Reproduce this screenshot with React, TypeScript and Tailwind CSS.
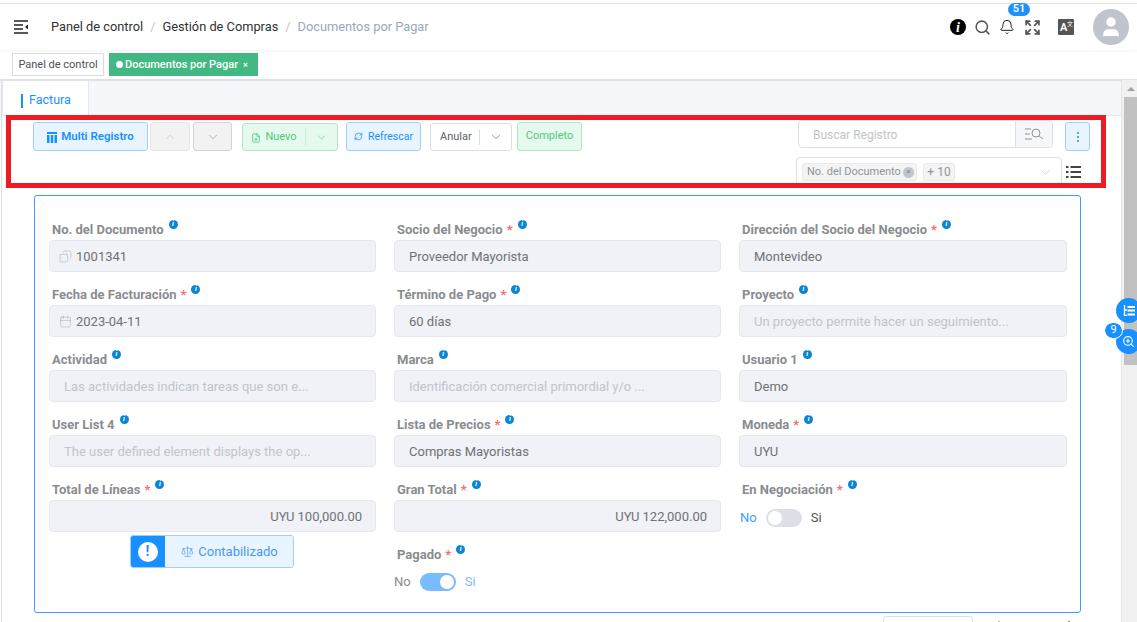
import { ChevronDown, ChevronUp, Search, FilePlus, RefreshCw, Scale, ZoomIn, Bell, Expand, Copy, Calendar, User } from "lucide-react";

function Info() {
  return (
    <span className="ml-[5px] inline-flex h-[9px] w-[9px] -translate-y-[5px] items-center justify-center rounded-full bg-[#0a84d6] text-[7px] font-bold italic leading-none text-white">
      i
    </span>
  );
}

function Label({ text, req }: { text: string; req?: boolean }) {
  return (
    <div className="flex h-[20px] items-center whitespace-nowrap pl-[3px] pt-[1px] text-[13px] font-bold text-[#8a8c90]">
      {text}
      {req && <span className="ml-[4px] text-[#f56c6c]">*</span>}
      <Info />
    </div>
  );
}

function Field({
  label,
  req,
  value,
  ph,
  right,
  icon,
}: {
  label: string;
  req?: boolean;
  value?: string;
  ph?: string;
  right?: boolean;
  icon?: React.ReactNode;
}) {
  return (
    <div className="h-[65px]">
      <Label text={label} req={req} />
      <div
        className={
          "mt-[1px] flex h-[32px] items-center rounded-[4px] border border-[#e4e7ed] bg-[#f0f2f7] pt-[1px] text-[13px] " +
          (right ? "justify-end pr-[13px] " : "pl-[14px] ") +
          (value ? "text-[#6f7176]" : "text-[#c0c4cc]")
        }
      >
        {icon}
        <span className="truncate">{value ?? ph}</span>
      </div>
    </div>
  );
}

function Toggle({ on }: { on: boolean }) {
  return (
    <div className="flex h-[20px] items-center text-[13px]">
      <span className={on ? "text-[#8a8c90]" : "text-[#409eff]"}>No</span>
      <span className={"relative mx-[9px] h-[18px] w-[36px] rounded-full " + (on ? "bg-[#79bbff]" : "bg-[#dcdfe6]")}>
        <span className={"absolute top-[2px] h-[14px] w-[14px] rounded-full bg-white " + (on ? "right-[2px]" : "left-[2px]")} />
      </span>
      <span className={on ? "text-[#79bbff]" : "text-[#555]"}>Si</span>
    </div>
  );
}

export default function App() {
  return (
    <div className="relative h-[622px] w-[1137px] overflow-hidden bg-white font-['Roboto',sans-serif]">
      <div className="mt-[3px] border-t border-[#e4e4e4]" />
      {/* top bar */}
      <div className="flex h-[46px] items-center pr-[8px] shadow-[0_1px_3px_rgba(0,0,0,0.06)]">
        <svg width="15" height="14" viewBox="0 0 15 14" className="ml-[14px]">
          <path d="M0 1h14M0 5h9M0 9h9M0 13h14" stroke="#222" strokeWidth="1.3" />
          <path d="M14 4.500l-3 2.500 3 2.500z" fill="#222" />
        </svg>
        <div className="ml-[22px] flex items-center whitespace-nowrap text-[12.8px] text-[#303133]">
          <span>Panel de control</span>
          <span className="mx-[7px] text-[#c0c4cc]">/</span>
          <span>Gestión de Compras</span>
          <span className="mx-[7px] text-[#c0c4cc]">/</span>
          <span className="text-[#97a8be]">Documentos por Pagar</span>
        </div>
        <div className="ml-auto flex items-center">
          <span className="flex h-[16px] w-[16px] items-center justify-center rounded-full bg-black font-['Liberation_Serif',serif] text-[14px] font-bold italic text-white">i</span>
          <Search size={17} strokeWidth={2.2} className="ml-[8px] text-[#555]" />
          <div className="relative ml-[8px]">
            <Bell size={16} strokeWidth={1.4} className="text-[#111]" />
            <span className="absolute -top-[16px] left-[9px] flex h-[13px] w-[22px] items-center justify-center rounded-full bg-[#1e90ff] text-[11px] font-semibold text-white">51</span>
          </div>
          <Expand size={17} strokeWidth={2.4} className="ml-[9px] text-[#555]" />
          <span className="relative ml-[17px] flex h-[16px] w-[16px] rounded-[1px] bg-[#555] text-white">
            <span className="absolute left-[2px] top-[2px] text-[11px] font-semibold leading-[14px]">A</span>
            <span className="absolute right-[1px] top-[1px] font-['Noto_Sans_CJK_SC',sans-serif] text-[6px] leading-[7px]">文</span>
          </span>
          <span className="ml-[19px] flex h-[36px] w-[36px] items-center justify-center rounded-full bg-[#c0c4cc] text-white">
            <User size={24} fill="white" strokeWidth={1.500} />
          </span>
        </div>
      </div>
      {/* tags */}
      <div className="flex h-[29px] items-start gap-[5px] pl-[12px] pt-[3px] text-[11px]">
        <span className="flex h-[23px] w-[92px] items-center justify-center border border-[#d8dce5] pt-[2px] text-[#495060]">Panel de control</span>
        <span className="flex h-[23px] w-[149px] items-center whitespace-nowrap bg-[#42b983] pl-[7px] pt-[2px] font-medium text-white">
          <span className="mb-[2px] mr-[2px] h-[7px] w-[7px] rounded-full bg-white" />
          Documentos por Pagar
          <span className="ml-[5px] text-[9px]">×</span>
        </span>
      </div>
      <div className="border-t-2 border-[#dfe1e8]" />
      {/* tabs */}
      <div className="flex h-[35px] border-b border-[#e4e7ed] bg-[#f5f7fa] pl-[2px]">
        <div className="flex w-[87px] items-center border-x border-[#e4e7ed] bg-white pl-[18px] pt-[5px] text-[12.500px] text-[#1890ff]">
          <span className="mr-[6px] h-[14px] w-[2px] bg-[#1890ff]" />
          Factura
        </div>
      </div>
      {/* toolbar */}
      <div className="relative h-[80px] pl-[33px] pt-[6px] text-[11px]">
        <div className="flex items-start">
          <span className="flex h-[29px] w-[115px] items-center justify-center rounded-[3px] border border-[#a0cfff] bg-[#e8f4ff] pt-[1px] text-[11.500px] font-semibold text-[#1890ff]">
            <svg width="10" height="11" viewBox="0 0 10 11" className="mr-[4px]" fill="currentColor">
              <path d="M0 0h10v2H0zM0 3h2.500v8H0zM3.750 3h2.500v8h-2.500zM7.500 3H10v8H7.500z" />
            </svg>
            Multi Registro
          </span>
          <span className="ml-[2px] flex h-[29px] w-[40px] items-center justify-center rounded-[3px] border border-[#e4e4e4] bg-[#f2f2f2] text-[#c0c4cc]">
            <ChevronUp size={14} strokeWidth={1.2} />
          </span>
          <span className="ml-[3px] flex h-[29px] w-[39px] items-center justify-center rounded-[3px] border border-[#d4d4d4] bg-[#f2f2f2] text-[#999]">
            <ChevronDown size={14} strokeWidth={1.2} />
          </span>
          <span className="ml-[10px] mt-[1px] flex h-[28px] w-[96px] items-center rounded-[3px] border border-[#b3e6c6] bg-[#e6f9ee] text-[#4ccb7d]">
            <span className="flex w-[63px] items-center justify-center border-r border-[#cdeeda] pt-[1px]">
              <FilePlus size={10} className="mr-[4px]" /> Nuevo
            </span>
            <ChevronDown size={13} strokeWidth={1.2} className="ml-[9px]" />
          </span>
          <span className="ml-[8px] flex h-[29px] w-[75px] items-center justify-center rounded-[3px] border border-[#a0cfff] bg-[#e8f4ff] text-[10.500px] text-[#1890ff]">
            <RefreshCw size={9} className="mr-[5px]" /> Refrescar
          </span>
          <span className="ml-[9px] mt-[1px] flex h-[28px] w-[82px] items-center rounded-[3px] border border-[#dcdfe6] text-[#606266]">
            <span className="w-[49px] border-r border-[#dcdfe6] pl-[9px]">Anular</span>
            <ChevronDown size={14} strokeWidth={1.2} className="ml-[9px]" />
          </span>
          <span className="ml-[5px] flex h-[29px] w-[65px] items-center justify-center rounded-[3px] border border-[#b3e6c6] bg-[#e6f9ee] text-[#4ccb7d]">Completo</span>
          <div className="ml-auto mr-[47px] flex flex-col items-end">
            <div className="flex items-start">
              <div className="-mt-[2px] flex h-[28px] w-[255px] items-center rounded-[4px] border border-[#dcdfe6] text-[12px] text-[#c0c4cc]">
                <span className="flex-1 pl-[14px] pt-[1px]">Buscar Registro</span>
                <span className="flex h-full w-[37px] items-center justify-center rounded-r-[4px] border-l border-[#dcdfe6] bg-[#f5f7fa] text-[#909399]">
                  <svg width="19" height="12" viewBox="0 0 19 12" fill="none" stroke="currentColor" strokeWidth="1">
                    <path d="M0 1h6M0 6h5M0 11h7" />
                    <circle cx="11" cy="5" r="4" />
                    <path d="M14 8l4 3" />
                  </svg>
                </span>
              </div>
              <span className="ml-[12px] flex h-[29px] w-[25px] items-center justify-center rounded-[3px] border border-[#a0cfff] bg-[#e8f4ff]">
                <span className="flex flex-col gap-[2px]">
                  <i className="h-[2px] w-[2px] rounded-full bg-[#1890ff]" />
                  <i className="h-[2px] w-[2px] rounded-full bg-[#1890ff]" />
                  <i className="h-[2px] w-[2px] rounded-full bg-[#1890ff]" />
                </span>
              </span>
            </div>
          </div>
        </div>
        <div className="absolute left-[796px] top-[41px] flex items-center">
          <div className="flex h-[30px] w-[266px] items-center rounded-[4px] border border-[#dcdfe6] pl-[5px] text-[11px] text-[#909399]">
            <span className="flex h-[18px] w-[115px] items-center justify-between rounded-[3px] border border-[#e9e9eb] bg-[#f4f4f5] pl-[4px] pr-[2px] whitespace-nowrap">
              No. del Documento
              <span className="flex h-[11px] w-[11px] items-center justify-center rounded-full bg-[#c0c4cc] text-[8px] leading-none text-[#888]">×</span>
            </span>
            <span className="ml-[6px] flex h-[18px] w-[32px] items-center justify-center rounded-[3px] border border-[#e9e9eb] bg-[#f4f4f5] text-[12px]">+ 10</span>
            <ChevronDown size={15} strokeWidth={1} className="ml-auto mr-[8px] text-[#c0c4cc]" />
          </div>
          <svg width="15" height="14" viewBox="0 0 15 14" className="ml-[4px]" stroke="#444" strokeWidth="2">
            <path d="M0 2h2.500M4.500 2H15M0 7h2.500M4.500 7H15M0 12h2.500M4.500 12H15" />
          </svg>
        </div>
      </div>
      {/* form */}
      <div className="absolute left-[34px] top-[195px] h-[418px] w-[1047px] rounded-[3px] border border-[#409eff] px-[14px] pt-[23px]">
        <div className="flex">
          <div className="w-[327px] shrink-0">
            <Field label="No. del Documento" value="1001341" icon={<Copy size={13} strokeWidth={1} className="-ml-[5px] mr-[4px] -scale-x-100 text-[#aaa]" />} />
            <Field label="Fecha de Facturación" req value="2023-04-11" icon={<Calendar size={13} strokeWidth={1} className="-ml-[5px] mr-[4px] text-[#aaa]" />} />
            <Field label="Actividad" ph="Las actividades indican tareas que son e..." />
            <Field label="User List 4" ph="The user defined element displays the op..." />
            <Field label="Total de Líneas" req value="UYU 100,000.00" right />
            <div className="-mt-[9px] flex justify-center pr-[2px]">
              <div className="flex h-[33px] w-[164px] overflow-hidden rounded-[3px] border border-[#a0cfff]">
                <span className="flex w-[34px] items-center justify-center bg-[#1890ff]">
                  <span className="flex h-[20px] w-[20px] items-center justify-center rounded-full bg-white text-[14px] font-bold text-[#1890ff]">!</span>
                </span>
                <span className="flex flex-1 items-center justify-center bg-[#e8f4ff] pl-[2px] text-[13px] text-[#4a98f7]">
                  <Scale size={13} strokeWidth={1.2} className="mr-[4px]" /> Contabilizado
                </span>
              </div>
            </div>
          </div>
          <div className="ml-[18px] w-[327px] shrink-0">
            <Field label="Socio del Negocio" req value="Proveedor Mayorista" />
            <Field label="Término de Pago" req value="60 días" />
            <Field label="Marca" ph="Identificación comercial primordial y/o ..." />
            <Field label="Lista de Precios" req value="Compras Mayoristas" />
            <Field label="Gran Total" req value="UYU 122,000.00" right />
            <Label text="Pagado" req />
            <div className="mt-[8px]">
              <Toggle on />
            </div>
          </div>
          <div className="ml-[18px] w-[328px] shrink-0">
            <Field label="Dirección del Socio del Negocio" req value="Montevideo" />
            <Field label="Proyecto" ph="Un proyecto permite hacer un seguimiento..." />
            <Field label="Usuario 1" value="Demo" />
            <Field label="Moneda" req value="UYU" />
            <Label text="En Negociación" req />
            <div className="mt-[9px] pl-[1px]">
              <Toggle on={false} />
            </div>
          </div>
        </div>
      </div>
      {/* bottom pager peek */}
      <div className="absolute left-[883px] top-[616px] h-[8px] w-[90px] rounded-t-[3px] border border-[#dcdfe6]" />
      <div className="absolute left-[998px] top-[621px] h-px w-[2px] bg-[#bbb]" />
      <div className="absolute left-[1068px] top-[621px] h-px w-[2px] bg-[#888]" />
      {/* left rail */}
      <div className="absolute left-[1px] top-[80px] h-[542px] w-px bg-[#dfe1e8]" />
      {/* red highlight */}
      <div className="absolute left-[6px] top-[115px] h-[73px] w-[1100px] border-[5px] border-[#ed1c24]" />
      {/* scrollbar */}
      <div className="absolute right-0 top-[80px] h-[542px] w-[16px] border-l border-[#e4e4e4] bg-[#f1f1f1]">
        <span className="absolute left-[5px] top-[7px] h-0 w-0 border-x-[4px] border-b-[4px] border-x-transparent border-b-[#a3a3a3]" />
        <div className="absolute left-[2px] top-[17px] h-[268px] w-[13px] bg-[#c1c1c1]" />
      </div>
      {/* floating buttons */}
      <span className="absolute left-[1116px] top-[298px] flex h-[25px] w-[25px] items-center justify-center rounded-full bg-[#1890ff] text-white">
        <svg width="12" height="11" viewBox="0 0 12 11" fill="none" stroke="currentColor">
          <path d="M1.500 0v10.500H4M1.500 5H4" strokeWidth="1.300" />
          <path d="M4.500 1h7.500v2H4.500zM4.500 4.500h7.500v2H4.500zM4.500 8.500h7.500v2H4.500z" fill="currentColor" stroke="none" />
        </svg>
      </span>
      <span className="absolute left-[1116px] top-[329px] flex h-[25px] w-[25px] items-center justify-center rounded-full bg-[#1890ff] text-white">
        <ZoomIn size={13} />
      </span>
      <span className="absolute left-[1105px] top-[323px] flex h-[15px] w-[17px] items-center justify-center rounded-full bg-[#1890ff] text-[11px] text-white outline outline-1 outline-white">9</span>
    </div>
  );
}
